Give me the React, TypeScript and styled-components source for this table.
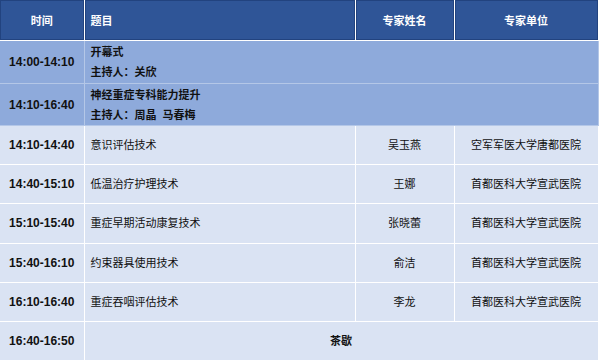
import React from "react";
import styled, { createGlobalStyle } from "styled-components";

const Global = createGlobalStyle`
  html, body { margin: 0; padding: 0; background: #ffffff; }
  body { font-family: "Liberation Sans", "Noto Sans CJK SC", sans-serif; }
`;

const Table = styled.table`
  width: 598px;
  border-collapse: collapse;
  table-layout: fixed;
  font-family: "Liberation Sans", "Noto Sans CJK SC", sans-serif;
  color: #111;
`;

const HeadCell = styled.th<{ $align?: "left" | "center" }>`
  height: 40px;
  padding: 0 6px;
  background: #2f5597;
  color: #ffffff;
  font-size: 11px;
  font-weight: 700;
  text-align: ${(p) => p.$align ?? "center"};
  border: 1px solid #ffffff;
  border-top: none;
  box-shadow: inset 0 0 0 1px #22437f;
  &:first-child { border-left: none; }
`;

const Row = styled.tr<{ $tone: "section" | "item" }>`
  background: ${(p) => (p.$tone === "section" ? "#8eaadb" : "#dae3f3")};
`;

const Cell = styled.td<{ $align?: "left" | "center"; $bold?: boolean; $h: number; $section?: boolean }>`
  height: ${(p) => p.$h}px;
  padding: 0 6px;
  font-size: 11px;
  line-height: 20px;
  font-weight: ${(p) => (p.$bold ? 700 : 400)};
  text-align: ${(p) => p.$align ?? "center"};
  border: 1px solid ${(p) => (p.$section ? "#b4c7e7" : "#ffffff")};
  border-left: 1px solid #ffffff;
  vertical-align: middle;
  white-space: pre;
  &:first-child { border-left: none; }
`;

const TimeCell = styled(Cell)`
  font-size: 12px;
  font-weight: 700;
`;

const Line = styled.div`
  font-weight: 700;
  line-height: 20px;
`;

const items = [
  ["14:10-14:40", "意识评估技术", "吴玉燕", "空军军医大学唐都医院"],
  ["14:40-15:10", "低温治疗护理技术", "王娜", "首都医科大学宣武医院"],
  ["15:10-15:40", "重症早期活动康复技术", "张晓蕾", "首都医科大学宣武医院"],
  ["15:40-16:10", "约束器具使用技术", "俞洁", "首都医科大学宣武医院"],
  ["16:10-16:40", "重症吞咽评估技术", "李龙", "首都医科大学宣武医院"],
];

export default function App() {
  return (
    <>
      <Global />
      <Table>
        <colgroup>
          <col style={{ width: 84 }} />
          <col style={{ width: 271 }} />
          <col style={{ width: 99 }} />
          <col style={{ width: 144 }} />
        </colgroup>
        <thead>
          <tr>
            <HeadCell>时间</HeadCell>
            <HeadCell $align="left">题目</HeadCell>
            <HeadCell>专家姓名</HeadCell>
            <HeadCell>专家单位</HeadCell>
          </tr>
        </thead>
        <tbody>
          <Row $tone="section">
            <TimeCell $h={42} $section>14:00-14:10</TimeCell>
            <Cell $h={42} $section $align="left" colSpan={3}>
              <Line>开幕式</Line>
              <Line>主持人：关欣</Line>
            </Cell>
          </Row>
          <Row $tone="section">
            <TimeCell $h={41} $section>14:10-16:40</TimeCell>
            <Cell $h={41} $section $align="left" colSpan={3}>
              <Line>神经重症专科能力提升</Line>
              <Line>{"主持人：周晶  马春梅"}</Line>
            </Cell>
          </Row>
          {items.map(([time, topic, name, unit]) => (
            <Row $tone="item" key={time}>
              <TimeCell $h={38.2}>{time}</TimeCell>
              <Cell $h={38.2} $align="left">{topic}</Cell>
              <Cell $h={38.2}>{name}</Cell>
              <Cell $h={38.2}>{unit}</Cell>
            </Row>
          ))}
          <Row $tone="item">
            <TimeCell $h={38}>16:40-16:50</TimeCell>
            <Cell $h={38} $bold colSpan={3}>茶歇</Cell>
          </Row>
        </tbody>
      </Table>
    </>
  );
}
